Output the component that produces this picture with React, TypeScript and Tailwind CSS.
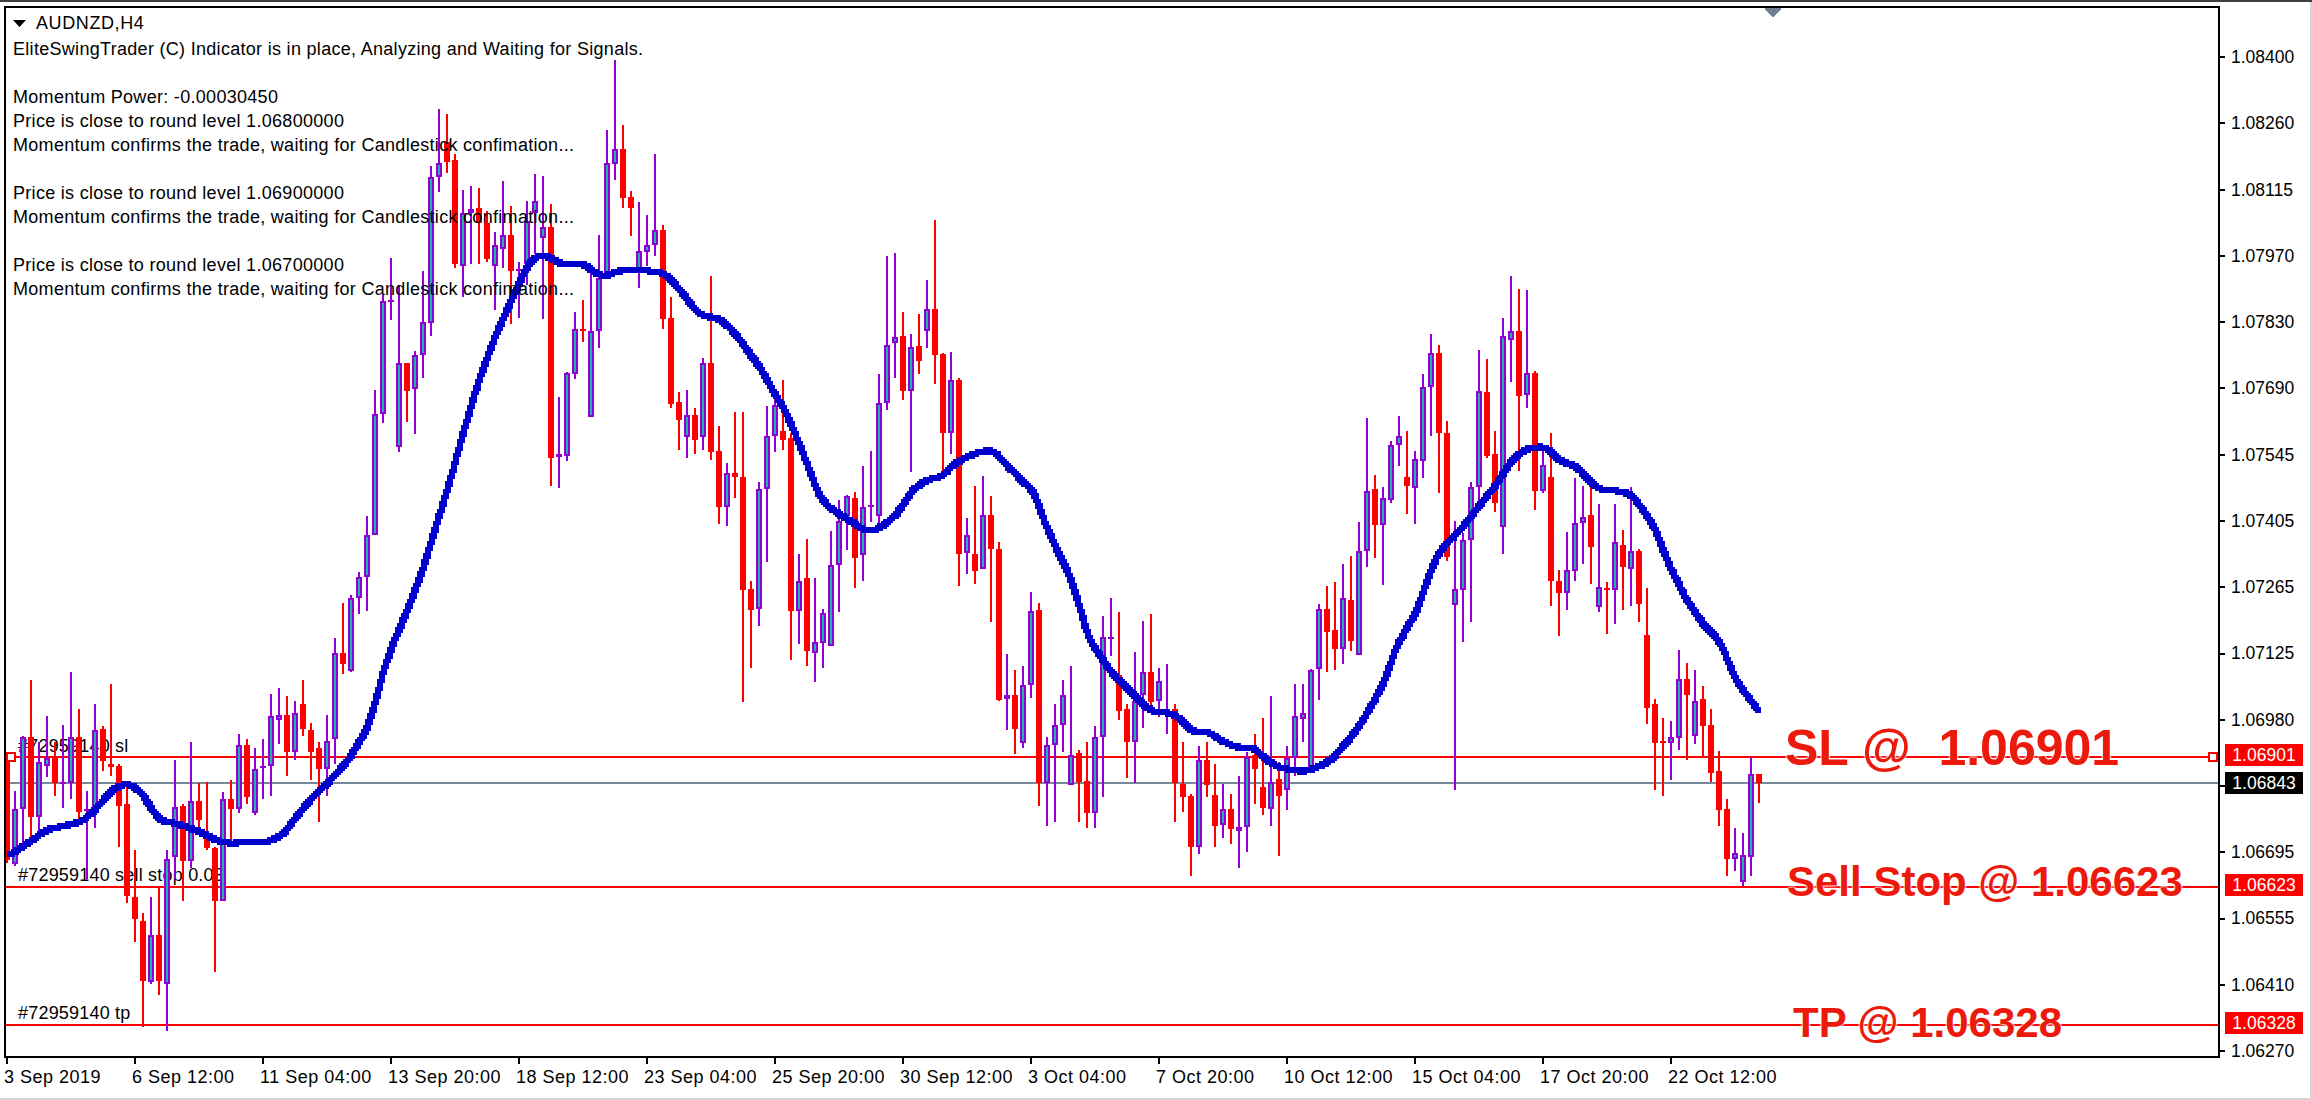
// MT4 style AUDNZD H4 chart. Candle data is read off the picture in 3x crops:
// [kind, high, bodyTop, bodyBottom, low], kind 0 = down (red), 1 = up (violet)
type Candle = [number, number, number, number, number];

const candles: Candle[] = [
  // x 0-450
  [0,1100,1105,1270,1275],[1,1162,1190,1277,1280],[1,1075,1077,1190,1250],[0,988,1077,1203,1240],
  [1,1085,1117,1203,1235],[1,1045,1110,1122,1140],[0,1085,1110,1150,1170],[1,1058,1147,1151,1188],
  [1,975,1077,1150,1175],[0,1033,1077,1195,1208],[1,1162,1190,1193,1300],[1,1025,1067,1190,1220],
  [0,1060,1064,1115,1130],[0,994,1120,1125,1138],[0,1120,1123,1185,1250],[0,1150,1183,1327,1337],
  [0,1255,1328,1363,1398],[0,1353,1365,1460,1532],[1,1328,1387,1462,1465],[0,1313,1387,1460,1482],
  [1,1255,1268,1465,1538],[1,1113,1187,1265,1300],[0,1183,1186,1272,1335],[1,1085,1177,1272,1283],
  [0,1150,1177,1207,1218],[0,1148,1237,1252,1255],[0,1250,1252,1335,1445],[1,1163,1174,1335,1335],
  [0,1145,1174,1190,1240],[1,1073,1090,1190,1197],[0,1080,1090,1172,1182],[1,1095,1128,1197,1200],
  [1,1080,1122,1125,1175],[1,1010,1045,1122,1170],[1,1000,1043,1050,1088],[0,1013,1042,1100,1138],
  [1,1020,1040,1100,1113],[0,988,1026,1065,1075],[0,1055,1067,1100,1145],[0,1085,1095,1128,1210],
  [1,1042,1083,1128,1170],[1,922,945,1080,1120],[0,867,945,962,978],[1,855,860,973,975],
  [1,818,826,860,885],[1,731,760,826,880],[1,533,570,760,760],[1,382,393,570,585],
  [1,326,392,395,423],[1,368,490,623,630],[0,490,490,535,583],[1,472,478,531,602],
  [1,346,427,479,514],[1,182,199,428,448],[1,92,177,199,222],[0,100,145,175,193],
  // x 450-900
  [0,163,172,336,342],[1,220,255,338,388],[1,213,250,256,336],[0,216,248,272,335],
  [0,252,272,328,332],[1,285,306,338,408],[1,205,290,312,342],[0,245,290,347,430],
  [1,333,343,347,420],[1,236,268,335,368],[1,195,237,256,320],[1,198,277,294,422],
  [0,241,277,640,683],[1,544,634,638,687],[1,505,506,636,645],[1,411,437,508,516],
  [0,392,437,441,458],[1,350,440,576,576],[1,290,358,440,467],[1,125,177,350,350],
  [1,16,155,178,204],[0,117,155,232,248],[0,221,230,247,292],[1,238,315,345,373],
  [1,258,305,316,338],[1,163,283,306,323],[0,274,283,422,438],[0,387,421,555,561],
  [0,536,552,580,627],[1,533,572,607,640],[0,562,572,611,633],[1,483,490,607,627],
  [0,354,490,630,643],[0,590,628,717,743],[1,647,663,716,746],[0,568,663,670,702],
  [0,568,669,847,1022],[0,832,845,878,969],[1,678,688,877,903],[1,558,606,689,803],
  [1,547,557,606,630],[0,518,597,611,627],[0,600,609,880,956],[1,790,832,880,931],
  [0,766,828,943,966],[1,828,929,946,991],[1,876,882,930,969],[1,754,807,934,934],
  [1,706,738,808,881],[1,697,700,730,784],[0,693,703,796,844],[1,652,716,792,832],
  [1,628,713,717,740],[1,508,553,730,742],[1,323,462,554,564],[1,318,450,459,514],
  // x 900-1350
  [0,411,448,535,549],[1,445,465,535,662],[0,414,464,488,508],[1,361,406,440,467],
  [0,267,406,479,523],[0,475,477,601,660],[1,474,518,601,633],[0,515,517,790,840],
  [1,734,760,789,822],[0,684,791,817,837],[1,668,729,814,814],[0,700,729,783,897],
  [0,772,782,1019,1021],[1,947,1011,1017,1066],[0,972,1011,1065,1104],[1,966,995,1087,1094],
  [1,850,879,995,1016],[0,867,878,1150,1185],[1,1077,1090,1150,1217],[1,1025,1058,1090,1210],
  [1,988,1011,1059,1100],[1,966,1106,1153,1153],[0,1098,1102,1147,1210],[0,1085,1146,1197,1220],
  [1,1060,1077,1197,1220],[1,887,920,1077,1172],[1,859,920,924,950],[0,881,980,1037,1050],
  [0,1025,1033,1085,1142],[1,944,1020,1085,1150],[1,895,976,1012,1063],[0,884,976,1022,1040],
  [1,969,989,1021,1046],[1,963,1033,1038,1073],[0,1025,1033,1150,1210],[0,1085,1151,1172,1195],
  [0,1167,1170,1250,1295],[1,1092,1114,1250,1260],[0,1085,1114,1153,1172],[0,1120,1168,1216,1250],
  [1,1151,1190,1215,1236],[0,1167,1190,1222,1245],[1,1138,1218,1224,1282],[1,1100,1108,1218,1258],
  [0,1073,1106,1128,1182],[0,1047,1155,1188,1200],[1,1013,1147,1190,1217],[0,1117,1143,1169,1264],
  [1,1091,1110,1161,1192],[1,994,1045,1110,1138],[1,994,1039,1049,1085],[1,970,972,1134,1134],
  [1,869,876,971,1019],[0,840,876,912,975],[0,834,910,940,972],[1,806,860,939,963],
  // x 1350-1800
  [0,794,862,927,943],[1,740,785,948,948],[1,577,691,785,811],[0,666,688,745,796],
  [1,685,703,745,839],[1,613,619,706,711],[1,574,606,620,652],[0,597,669,684,727],
  [1,628,641,686,743],[1,508,528,645,671],[1,446,475,528,605],[0,462,475,601,695],
  [0,581,600,795,802],[1,738,845,871,1160],[1,758,769,846,928],[1,678,685,769,897],
  [1,470,534,685,710],[0,484,537,637,640],[0,597,634,710,724],[1,420,449,748,790],
  [1,354,440,454,521],[0,374,440,543,660],[1,376,506,541,562],[0,503,506,692,721],
  [1,625,650,692,695],[0,600,669,833,872],[0,815,832,852,919],[1,756,816,852,878],
  [1,671,741,817,833],[1,684,732,742,806],[0,670,729,780,837],[1,712,842,874,881],
  [0,834,843,847,916],[1,712,772,846,900],[0,753,776,811,878],[1,685,785,814,872],
  [0,782,785,868,897],[0,844,917,1031,1057],[0,1017,1026,1087,1160],[0,1047,1083,1087,1170],
  [1,1052,1077,1087,1145],[1,941,986,1078,1098],[0,961,986,1012,1113],[1,972,1020,1075,1088],
  [0,997,1017,1060,1108],[0,1033,1058,1134,1148],[0,1099,1130,1191,1217],[0,1174,1190,1269,1295],
  [1,1220,1259,1268,1288],[1,1227,1262,1305,1311],[1,1108,1136,1266,1295],[0,1136,1136,1150,1180],
];

// moving average, [crop x offset, crop x, crop y]
const maCrops: [number, number[][]][] = [
  [0, [[21,1265],[60,1252],[100,1238],[140,1222],[200,1216],[250,1209],[290,1188],[340,1158],[385,1149],[425,1165],[455,1190],[480,1208],[520,1212],[570,1220],[610,1228],[650,1240],[700,1245],[740,1240],[800,1243],[850,1230],[900,1195],[950,1165],[1000,1140],[1050,1110],[1100,1065],[1125,1025],[1150,975],[1180,930],[1225,875],[1265,820],[1300,760],[1348,680]]],
  [450, [[40,600],[80,530],[120,470],[160,420],[200,375],[230,340],[260,322],[290,321],[320,333],[350,337],[400,334],[425,345],[450,355],[480,353],[500,346],[560,346],[630,347],[660,358],[700,382],[730,405],[760,418],[800,419],[850,440],[890,470],[930,497],[970,535],[1010,570],[1050,620],[1090,675],[1115,705],[1150,722],[1200,738],[1240,753],[1270,755],[1310,742],[1350,722]]],
  [900, [[30,695],[70,676],[130,668],[160,650],[200,638],[240,630],[280,627],[310,645],[360,672],[400,692],[430,735],[470,783],[510,825],[540,875],[565,920],[600,950],[640,980],[700,1010],[755,1038],[820,1040],[880,1070],[920,1068],[970,1085],[1020,1095],[1060,1093],[1110,1118],[1150,1127],[1220,1132],[1290,1115],[1350,1080]]],
  [1350, [[40,1050],[100,995],[140,935],[200,880],[240,820],[270,785],[340,747],[440,680],[490,640],[530,625],[585,621],[630,645],[680,653],[740,688],[800,691],[845,696],[910,745],[960,810],[1010,862],[1060,900],[1110,928],[1160,990],[1230,1040]]],
];

const py = (z: number) => Math.round(50 + z / 1.568);

// the line is a square pen stamped along the curve, which gives the blocky edge of the picture
const buildMaPath = () => {
  const pts = maCrops.flatMap(([off, list]) => list.map(([x, y]) => [off + x / 3, 50 + y / 1.568]));
  const samples: number[][] = [];
  for (let i = 0; i < pts.length - 1; i++) {
    const [x0, y0] = pts[i];
    const [x1, y1] = pts[i + 1];
    const steps = Math.max(1, Math.ceil(Math.hypot(x1 - x0, y1 - y0)));
    for (let s = 0; s < steps; s++) samples.push([x0 + ((x1 - x0) * s) / steps, y0 + ((y1 - y0) * s) / steps]);
  }
  samples.push(pts[pts.length - 1]);
  const win = 8;
  let d = '';
  samples.forEach((_, i) => {
    const a = Math.max(0, i - win);
    const b = Math.min(samples.length - 1, i + win);
    let sx = 0;
    let sy = 0;
    for (let j = a; j <= b; j++) {
      sx += samples[j][0];
      sy += samples[j][1];
    }
    const n = b - a + 1;
    const x = Math.round(sx / n / 2) * 2;
    const y = Math.round(sy / n / 2) * 2;
    d += `M${x - 3} ${y - 3}h6v6h-6z`;
  });
  return d;
};

const maPath = buildMaPath();

const prices = ['1.08400','1.08260','1.08115','1.07970','1.07830','1.07690','1.07545','1.07405','1.07265','1.07125','1.06980','1.06840','1.06695','1.06555','1.06410','1.06270'];
const times = ['3 Sep 2019','6 Sep 12:00','11 Sep 04:00','13 Sep 20:00','18 Sep 12:00','23 Sep 04:00','25 Sep 20:00','30 Sep 12:00','3 Oct 04:00','7 Oct 20:00','10 Oct 12:00','15 Oct 04:00','17 Oct 20:00','22 Oct 12:00'];

const readout = [
  'EliteSwingTrader (C) Indicator is in place, Analyzing and Waiting for Signals.',
  '',
  'Momentum Power: -0.00030450',
  'Price is close to round level 1.06800000',
  'Momentum confirms the trade, waiting for Candlestick confimation...',
  '',
  'Price is close to round level 1.06900000',
  'Momentum confirms the trade, waiting for Candlestick confimation...',
  '',
  'Price is close to round level 1.06700000',
  'Momentum confirms the trade, waiting for Candlestick confimation...',
];

const Chart = () => (
  <svg className="absolute inset-0 block" width="2212" height="1048" viewBox="6 8 2212 1048" shapeRendering="crispEdges">
    <rect x="6" y="756" width="2212" height="2" fill="#ff0000" />
    <rect x="6" y="782" width="2212" height="2" fill="#778899" />
    <rect x="6" y="886" width="2212" height="2" fill="#ff0000" />
    <rect x="6" y="1024" width="2212" height="2" fill="#ff0000" />
    <polygon points="1765,8 1781,8 1781,10 1773,17 1765,10" fill="#708090" />
    {candles.map(([kind, h, t, b, l], i) => {
      const x = 7 + 8 * i;
      const top = py(t);
      const height = Math.max(py(b) - top, 2);
      const color = kind ? '#9400d3' : '#ff0000';
      return (
        <g key={i}>
          <rect x={x - 1} y={py(h)} width="2" height={py(l) - py(h)} fill={color} />
          <rect x={x - 3} y={top} width="6" height={height} fill={color} />
          {kind === 1 && height > 4 && <rect x={x - 1} y={top + 2} width="2" height={height - 4} fill="#20b2aa" />}
        </g>
      );
    })}
    <path d={maPath} fill="#0000cd" />
    <rect x="7" y="753" width="8" height="8" fill="#ffffff" stroke="#ff0000" strokeWidth="2" />
    <rect x="2209" y="753" width="8" height="8" fill="#ffffff" stroke="#ff0000" strokeWidth="2" />
  </svg>
);

const App = () => {
  return (
    <div className="w-[2312px] h-[1100px] bg-white flex flex-col overflow-hidden font-['Liberation_Sans',Arial,sans-serif] text-[17.5px] text-black">
      <div className="h-[2px] bg-[#404040]"></div>
      <div className="flex-1 flex">
        <div className="flex-1 flex pl-[4px] pt-[4px]">
          <div className="w-[2216px] flex flex-col">
            <div className="relative h-[1052px] border-2 border-black">
              {/* order labels sit under the candles */}
              <div className="absolute left-[12px] top-[726px] text-[18px] tracking-[0.2px] leading-[24px] whitespace-nowrap">#72959140 sl</div>
              <div className="absolute left-[12px] top-[855px] text-[18px] tracking-[0.2px] leading-[24px] whitespace-nowrap">#72959140 sell stop 0.03</div>
              <div className="absolute left-[12px] top-[993px] text-[18px] tracking-[0.2px] leading-[24px] whitespace-nowrap">#72959140 tp</div>
              <Chart />
              <div className="absolute left-[7px] top-[3px] text-[18px] tracking-[0.3px] whitespace-nowrap">
                <div className="flex items-center h-[24px] mb-[2px]">
                  <svg width="13" height="7" viewBox="0 0 13 7">
                    <polygon points="0,0 13,0 6.5,7" fill="#000000" />
                  </svg>
                  <span className="ml-[10px] tracking-[0.6px]">AUDNZD,H4</span>
                </div>
                {readout.map((line, i) => (
                  <div key={i} className="h-[24px] leading-[24px]">{line}</div>
                ))}
              </div>
              <div className="absolute left-[1779px] top-[715px] text-[50px] leading-none font-bold text-[#ec1a0c] whitespace-pre [text-shadow:0_0_2px_#fff,0_0_2px_#fff,0_0_3px_#fff]">SL @  1.06901</div>
              <div className="absolute left-[1781px] top-[853px] text-[42px] leading-none font-bold text-[#ec1a0c] whitespace-pre [text-shadow:0_0_2px_#fff,0_0_2px_#fff,0_0_3px_#fff]">Sell Stop @ 1.06623</div>
              <div className="absolute left-[1787px] top-[994px] text-[42px] leading-none font-bold text-[#ec1a0c] whitespace-pre [text-shadow:0_0_2px_#fff,0_0_2px_#fff,0_0_3px_#fff]">TP @ 1.06328</div>
            </div>
            <div className="flex">
              {times.map((time) => (
                <div key={time} className="w-[128px] shrink-0">
                  <div className="ml-[2px] w-[2px] h-[6px] bg-black"></div>
                  <div className="text-[18px] tracking-[0.5px] leading-[24px] mt-[1px] whitespace-nowrap">{time}</div>
                </div>
              ))}
            </div>
          </div>
          <div className="relative flex-1 pt-[18px]">
            {prices.map((price) => (
              <div key={price} className="flex items-center h-[66.27px]">
                <div className="w-[5px] h-[2px] bg-black"></div>
                <span className="ml-[6px]">{price}</span>
              </div>
            ))}
            <div className="absolute left-[5px] top-[738px] w-[78px] h-[22px] bg-[#ff0000] text-white flex items-center justify-center">1.06901</div>
            <div className="absolute left-[5px] top-[766px] w-[78px] h-[22px] bg-black text-white flex items-center justify-center">1.06843</div>
            <div className="absolute left-[5px] top-[868px] w-[78px] h-[22px] bg-[#ff0000] text-white flex items-center justify-center">1.06623</div>
            <div className="absolute left-[5px] top-[1006px] w-[78px] h-[22px] bg-[#ff0000] text-white flex items-center justify-center">1.06328</div>
          </div>
        </div>
        <div className="w-[2px] bg-[#d4d4d4]"></div>
      </div>
      <div className="h-[2px] bg-[#d4d4d4]"></div>
    </div>
  );
};

export default App;
